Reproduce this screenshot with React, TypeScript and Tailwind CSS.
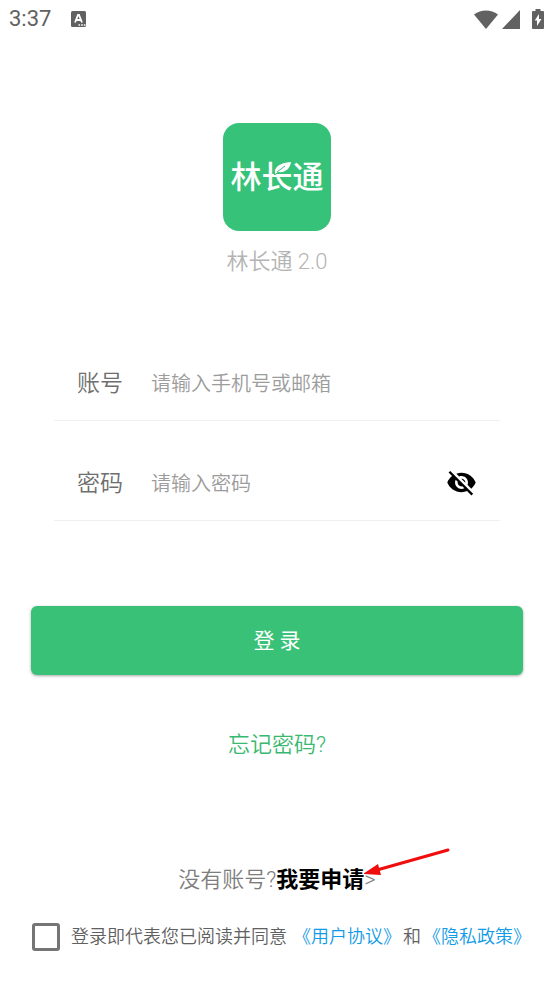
import React from "react";

const StatusBar: React.FC = () => {
  return (
    <header className="flex h-9 items-center justify-between pl-[9px] pr-[10px] pt-[2px] text-[#616161]">
      <div className="flex items-center gap-5">
        <span className="font-[Roboto] text-[22px] font-normal leading-8">3:37</span>
        <svg className="size-4" viewBox="0 0 16 16" aria-hidden="true">
          <rect width="15" height="16" x="0" rx="1.5" fill="currentColor" />
          <path
            d="M4 11.5 7 4h1l3 7.5M5.3 9h4.4"
            fill="none"
            stroke="#fff"
            strokeWidth="1.8"
          />
          <path d="M7.500 14h1.6M10.2 14h1.6M12.8 14h1.6" stroke="#fff" strokeWidth="1.5" />
        </svg>
      </div>
      <div className="flex items-center gap-1">
        <svg className="h-[19px] w-6" viewBox="0 0 24 19" fill="currentColor" aria-hidden="true">
          <path d="M0 4.5C7 -.8 17 -.8 24 4.5L12 19z" />
        </svg>
        <svg className="h-[19px] w-[18px]" viewBox="0 0 18 19" fill="currentColor" aria-hidden="true">
          <path d="M18 0v19H0z" />
        </svg>
        <svg className="ml-2 h-5 w-3" viewBox="0 0 12 20" aria-hidden="true">
          <path
            d="M3.5 0h5v2H11a1 1 0 0 1 1 1v16a1 1 0 0 1-1 1H1a1 1 0 0 1-1-1V3a1 1 0 0 1 1-1h2.500z"
            fill="currentColor"
          />
          <path d="M7 5v5h2.500L5 17v-5.500H2.700z" fill="#fff" />
        </svg>
      </div>
    </header>
  );
};

const Logo: React.FC = () => {
  return (
    <div className="relative flex size-[108px] items-center justify-center rounded-2xl bg-[#37c279] pt-[2px]">
      <span className="text-[31px] font-medium leading-10 text-white">林长通</span>
      <svg
        className="absolute left-[50px] top-[38px] h-[14px] w-[20px]"
        viewBox="0 0 20 14"
        aria-hidden="true"
      >
        <path
          d="M2 13C1 6 6 2 18 1c-1 7-6 11-13 10z"
          fill="#fff"
          stroke="#37c279"
          strokeWidth="2"
          paintOrder="stroke"
        />
        <path d="M4 11 12 5" stroke="#37c279" strokeWidth="1" />
      </svg>
    </div>
  );
};

type FieldProps = {
  id: string;
  label: string;
  type: string;
  placeholder: string;
  children?: React.ReactNode;
};

const Field: React.FC<FieldProps> = ({ id, label, type, placeholder, children }) => {
  return (
    <div className="flex h-[100px] items-center border-b border-[#f0f0f0] px-[23px] pt-[26px]">
      <label htmlFor={id} className="w-[74px] shrink-0 text-[23px] leading-8 text-[#6e6e6e]">
        {label}
      </label>
      <input
        id={id}
        type={type}
        placeholder={placeholder}
        className="min-w-0 flex-1 bg-transparent text-[20px] leading-8 text-[#333] outline-none placeholder:text-[#9c9c9c]"
      />
      {children}
    </div>
  );
};

export default function App() {
  return (
    <div className="min-h-screen overflow-hidden bg-white font-['Roboto','Noto_Sans_CJK_SC',sans-serif] font-[350]">
      <StatusBar />
      <main className="flex flex-col px-[31px] pt-[87px]">
        <div className="flex flex-col items-center">
          <Logo />
          <h1 className="mt-[15px] text-[22px] leading-8 text-[#b4b4b4]">林长通 2.0</h1>
        </div>

        <form className="flex flex-col" onSubmit={(e) => e.preventDefault()}>
          <div className="mx-[23px] mt-[43px]">
            <Field id="account" label="账号" type="text" placeholder="请输入手机号或邮箱" />
            <Field id="password" label="密码" type="password" placeholder="请输入密码">
              <button type="button" aria-label="显示密码" className="shrink-0 pb-[2px]">
                <svg className="size-[31px]" viewBox="0 0 24 24" fill="#000" aria-hidden="true">
                  <path d="M12 7c2.760 0 5 2.240 5 5 0 .65-.13 1.260-.36 1.830l2.920 2.920c1.510-1.260 2.700-2.890 3.430-4.750-1.730-4.390-6-7.500-11-7.500-1.400 0-2.740.25-3.980.7l2.160 2.160C10.740 7.130 11.350 7 12 7zM2 4.270l2.280 2.280.46.46C3.080 8.300 1.780 10.020 1 12c1.730 4.390 6 7.500 11 7.500 1.550 0 3.030-.3 4.380-.84l.42.42L19.730 22 21 20.730 3.270 3 2 4.270zM7.530 9.800l1.550 1.550c-.05.21-.08.43-.08.65 0 1.660 1.340 3 3 3 .22 0 .44-.03.65-.08l1.550 1.550c-.67.33-1.410.53-2.200.53-2.760 0-5-2.240-5-5 0-.79.2-1.530.53-2.200zm4.310-.78 3.150 3.150.02-.16c0-1.660-1.340-3-3-3l-.17.01z" />
                </svg>
              </button>
            </Field>
          </div>

          <button
            type="submit"
            className="mt-[85px] h-[69px] rounded-md bg-[#39c178] pt-[2px] text-[21px] font-normal text-white shadow-[0_1px_3px_rgba(0,0,0,0.35)]"
          >
            登 录
          </button>

          <a href="#forgot" className="mt-[54px] self-center text-[22px] leading-8 text-[#39b870]">
            忘记密码?
          </a>

          <p className="mt-[103px] self-center text-[22px] leading-8 text-[#7d7d7d]">
            没有账号?
            <a href="#apply" className="relative font-bold text-black">
              我要申请
              <svg
                className="absolute left-full top-0 -mt-5 h-[30px] w-[88px]"
                viewBox="0 0 88 30"
                aria-hidden="true"
              >
                <path d="M84 3 13 23" stroke="#f00d0d" strokeWidth="3" strokeLinecap="round" />
                <path d="M-1 27 14 17 17 28z" fill="#f00d0d" />
              </svg>
            </a>
            &gt;
          </p>

          <div className="-mr-6 mt-6 flex items-center gap-[11px] whitespace-nowrap pb-6 text-[18px] leading-8 text-[#606060]">
            <input
              id="agree"
              type="checkbox"
              className="ml-px size-7 shrink-0 appearance-none rounded-[3px] border-3 border-[#757575] checked:bg-[#39c178]"
            />
            <div className="flex gap-[2px] pt-px">
              <label htmlFor="agree" className="mr-1">
                登录即代表您已阅读并同意
              </label>
              <a href="#terms" className="text-[#129be6]">
                《用户协议》
              </a>
              <span>和</span>
              <a href="#privacy" className="text-[#129be6]">
                《隐私政策》
              </a>
            </div>
          </div>
        </form>
      </main>
    </div>
  );
}
